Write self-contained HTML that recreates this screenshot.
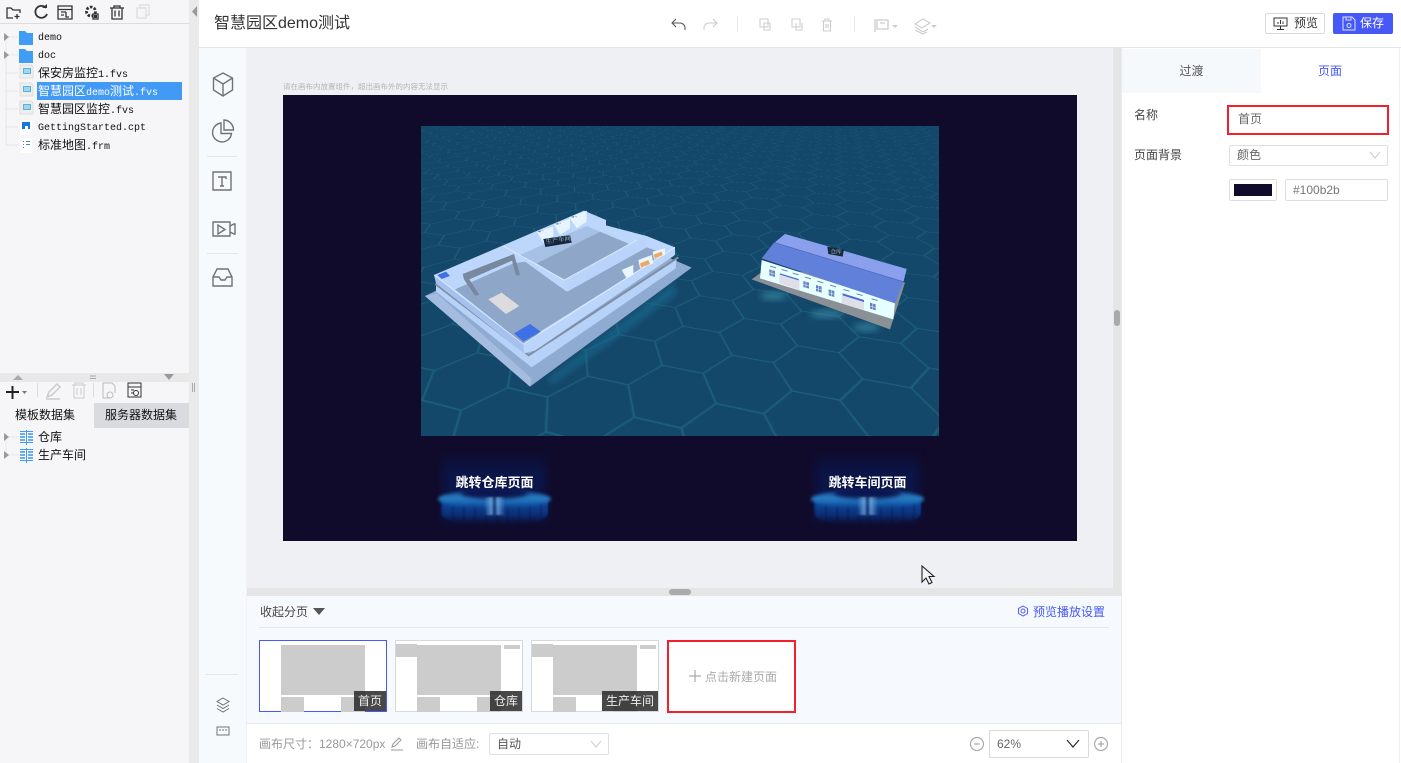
<!DOCTYPE html>
<html><head><meta charset="utf-8"><style>
html,body{margin:0;padding:0;width:1401px;height:763px;overflow:hidden;background:#fff;font-family:"Liberation Sans","Noto Sans CJK SC",sans-serif;font-size:12px;color:#333}
.a{position:absolute;box-sizing:border-box;white-space:nowrap}
svg{position:absolute;overflow:visible}
.t{position:absolute;font-family:"Liberation Mono","WenQuanYi Zen Hei","Noto Sans CJK SC",monospace;font-size:12px;line-height:18px;color:#111;letter-spacing:0;white-space:nowrap}
.t i{font-style:normal;font-size:10px}
.thumb{position:absolute;top:640px;width:128px;height:72px;background:#fff;border:1px solid #d5d8dc;box-sizing:border-box}
.thumb b{position:absolute;background:#ccc}
.thumb span{position:absolute;right:0;bottom:0;height:20px;line-height:20px;background:rgba(40,40,40,.85);color:#eee;font-size:12px;padding:0 4px}
.glow{position:absolute;top:450px;width:117px;height:77px;overflow:hidden;background:linear-gradient(90deg,rgba(16,11,43,0),#0b1548 12%,#0b1548 88%,rgba(16,11,43,0));-webkit-mask-image:linear-gradient(rgba(0,0,0,0),#000 30%,#000 85%,rgba(0,0,0,0));mask-image:linear-gradient(rgba(0,0,0,0),#000 30%,#000 85%,rgba(0,0,0,0))}
.glow .ring{position:absolute;left:2px;top:40px;width:113px;height:18px;border-radius:50%;filter:blur(1.500px);background:linear-gradient(#123f88 0,#2a80c4 45%,#1560b0 75%,#0e3a80 100%)}
.glow .hole{position:absolute;left:25px;top:37px;width:67px;height:12px;border-radius:50%;background:#0b1650;filter:blur(2px)}
.glow .body{position:absolute;left:5px;top:50px;width:107px;height:27px;filter:blur(.8px);background:repeating-linear-gradient(90deg,rgba(6,16,70,.3) 0 2px,transparent 2px 11px),linear-gradient(#0e4c9c 0,#0c3480 45%,rgba(14,24,80,0) 100%);border-radius:0 0 50% 50%}
.glow .mid{position:absolute;left:48px;top:47px;width:21px;height:18px;filter:blur(.8px);background:linear-gradient(90deg,transparent,#8fcaf5 35%,#10245f 50%,#8fcaf5 65%,transparent);opacity:.6}
</style></head><body>

<!-- left panel -->
<div class="a" style="left:0;top:0;width:189px;height:763px;background:#f6f6f8"></div>
<div class="a" style="left:189px;top:0;width:10px;height:763px;background:#eaeaea"></div>
<div class="a" style="left:0;top:23px;width:189px;height:1px;background:#dcdcdf"></div>
<svg style="left:0;top:0" width="200" height="24" viewBox="0 0 200 24" fill="none" stroke="#333" stroke-width="1.300">
<path d="M13 18H7V8h4l2 2h7v3M17 14v5M14.500 16.500h5"/>
<path d="M46 8a6 6 0 1 0 1 6" stroke-width="1.800"/><path d="M42 8h5V4z" fill="#333" stroke="none"/>
<path d="M58 6h14v13H58zM58 9.500h14M61 12h5M61 15h3M66 12v5h3"/>
<circle cx="91" cy="11.500" r="4.500" stroke-width="2.800" stroke-dasharray="2.500 1.500"/><path d="M93 14h5v5h-5z" fill="#f6f6f8"/><path d="M94 15h3v3h-3z" fill="#333" stroke="none"/>
<path d="M110 8h14M114 8V6h6v2M112 8v11h10V8M115 10.500v6M119 10.500v6"/>
<path d="M137 8h9v10h-9zM140 8V5h9v10h-3" stroke="#ddd"/>
</svg>
<svg style="left:192px;top:6px" width="6" height="12"><path d="M5 0v11L0 5.500z" fill="#999"/></svg>

<!-- tree -->
<svg style="left:0;top:28px" width="60" height="130" fill="none">
<path d="M6 9v108M6 9h12M6 27h12M6 45h12M6 63h12M6 81h12M6 99h12M6 117h12" stroke="#e6e6e6"/>
<path d="M4 5l5 4-5 4zM4 23l5 4-5 4z" fill="#999"/>
<path d="M19 3h6l2 2h6v12H19z M19 21h6l2 2h6v12H19z" fill="#3f9cf7"/>
</svg>
<svg style="left:20px;top:64px" width="16" height="90">
<g><path d="M0 1h11l2 2v11H0z" fill="#eee" stroke="#ddd"/><path d="M3 4h8v6H3z" fill="#5fb0d8"/><path d="M4 6h6M4 8h6" stroke="#dff"/></g>
<g transform="translate(0,36)"><path d="M0 1h11l2 2v11H0z" fill="#eee" stroke="#ddd"/><path d="M3 4h8v6H3z" fill="#5fb0d8"/><path d="M4 6h6M4 8h6" stroke="#dff"/></g>
<g transform="translate(0,18)"><path d="M0 1h11l2 2v11H0z" fill="#eee" stroke="#ddd"/><path d="M3 4h8v6H3z" fill="#5fb0d8"/><path d="M4 6h6M4 8h6" stroke="#dff"/></g>
<path d="M0 56h12v12H9l3 3H0z" fill="#fff"/><path d="M2 58h8v7H8V62H5v3H2z" fill="#1878d8"/>
<path d="M0 74h12v12H9l3 3H0z" fill="#fff"/><path d="M3 77h1v1H3zM3 80h1v1H3zM3 83h1v1H3zM6 77h4v1H6zM6 80h4v1H6z" fill="#48a"/>
</svg>
<div class="a" style="left:37px;top:82px;width:145px;height:18px;background:#4299f6"></div>
<div class="t" style="left:38px;top:28px"><i>demo</i></div>
<div class="t" style="left:38px;top:46px"><i>doc</i></div>
<div class="t" style="left:38px;top:65px">保安房监控<i>1.fvs</i></div>
<div class="t" style="left:38px;top:83px;color:#fff">智慧园区<i>demo</i>测试<i>.fvs</i></div>
<div class="t" style="left:38px;top:101px">智慧园区监控<i>.fvs</i></div>
<div class="t" style="left:38px;top:118px"><i>GettingStarted.cpt</i></div>
<div class="t" style="left:38px;top:137px">标准地图<i>.frm</i></div>

<!-- splitter -->
<div class="a" style="left:0;top:373px;width:189px;height:9px;background:#e8e8e8"></div>
<svg style="left:0;top:373px" width="200" height="60" fill="none">
<path d="M13 7l5-5 5 5z" fill="#aaa"/><path d="M164 1h10l-5 6z" fill="#999"/><path d="M90 3h6M90 5.500h6" stroke="#aaa"/>
<path d="M192.500 10v9M194.500 10v9" stroke="#aaa"/>
<path d="M6 19h13M12.500 13v13" stroke="#222" stroke-width="2"/><path d="M22 18h5l-2.500 3z" fill="#777"/>
<path d="M37.500 10v14M93.500 10v14" stroke="#ddd"/>
<path d="M47 24l2-5 8-8 3 3-8 8zM46 26h14" stroke="#ccc" stroke-width="1.500"/>
<path d="M72 12h14M75 12v-2h8v2M74 12v13h10V12M77 15v7M81 15v7" stroke="#ccc"/>
<path d="M103 25V10h9l3 3v7M109 25h-6" stroke="#bbb"/><circle cx="110" cy="22" r="3" stroke="#bbb"/>
<path d="M128 10h13v14h-13zM128 14h13M131 17h3M131 20h3" stroke="#333"/><circle cx="136" cy="20" r="2.500" stroke="#333"/>
</svg>
<div class="a" style="left:0;top:403px;width:90px;height:25px;text-align:center;line-height:25px;color:#111">模板数据集</div>
<div class="a" style="left:94px;top:403px;width:95px;height:25px;background:#dadbde;padding-left:11px;line-height:25px;color:#111">服务器数据集</div>
<svg style="left:0;top:428px" width="40" height="40" fill="none">
<path d="M6 9v18M6 9h12M6 27h12" stroke="#e6e6e6"/><path d="M4 5l5 4-5 4zM4 23l5 4-5 4z" fill="#999"/>
<g><path d="M20 3.500h13M20 14.500h13M26.500 2v15" stroke="#3f9cf7"/><path d="M20 5h5v2h-5zM20 8h5v2h-5zM20 11h5v2h-5zM28 5h5v2h-5zM28 8h5v2h-5zM28 11h5v2h-5z" fill="#6aaee8"/></g>
<g transform="translate(0,18)"><path d="M20 3.500h13M20 14.500h13M26.500 2v15" stroke="#3f9cf7"/><path d="M20 5h5v2h-5zM20 8h5v2h-5zM20 11h5v2h-5zM28 5h5v2h-5zM28 8h5v2h-5zM28 11h5v2h-5z" fill="#6aaee8"/></g>
</svg>
<div class="t" style="left:38px;top:429px">仓库</div>
<div class="t" style="left:38px;top:447px">生产车间</div>

<!-- header -->
<div class="a" style="left:199px;top:0;width:1202px;height:48px;background:#fff;border-bottom:1px solid #e4e6ea"></div>
<div class="a" style="left:214px;top:12px;font-size:16px;line-height:24px;color:#333">智慧园区demo测试</div>
<svg style="left:660px;top:12px" width="290" height="26" fill="none" stroke="#ccc" stroke-width="1.100">
<path d="M13 11h7a5 5 0 0 1 5 5v2M16 7l-4 4 4 4" stroke="#555"/>
<path d="M44 18v-2a5 5 0 0 1 5-5h7M53 7l4 4-4 4"/>
<path d="M77.500 4v16M194.500 4v16" stroke="#e8e8e8"/>
<path d="M100 7h8v8h-8zM104 11h6v7h-6z"/><path d="M132 7h8v8h-8zM136 11v7h6v-7"/>
<path d="M162 9h10M165 9V7h4v2M163.500 9v10h7V9M166 12v4M168 12v4"/>
<path d="M215 7v13M217 8h11v9h-11zM220 11h5" stroke-width="1.300"/><path d="M232 13h6l-3 3z" fill="#ccc" stroke="none"/>
<path d="M255 12l8-5 7 4-8 5zM255 15l8 5 5-3M255 18l8 4 4-2"/><path d="M271 13h6l-3 3z" fill="#ccc" stroke="none"/>
</svg>
<div class="a" style="left:1265px;top:13px;width:60px;height:21px;border:1px solid #d7d9dc;border-radius:2px;background:#fff;color:#333;line-height:19px;padding-left:28px">预览</div>
<svg style="left:1273px;top:17px" width="16" height="14" fill="none" stroke="#333"><path d="M1 1h13v8H1zM7.500 9v3M4 12.500h7M5 7V5M7.500 7V3M10 7V4.500"/></svg>
<div class="a" style="left:1333px;top:13px;width:60px;height:21px;border-radius:2px;background:#4658f7;color:#fff;line-height:21px;padding-left:27px">保存</div>
<svg style="left:1342px;top:16px" width="14" height="15" fill="none" stroke="#dfe3ff"><path d="M1 1h9l3 3v10H1zM4 1v3h5V1"/><circle cx="7" cy="9.500" r="2"/></svg>

<!-- rail -->
<div class="a" style="left:199px;top:48px;width:48px;height:715px;background:#f7fafd;border-right:1px solid #f0f2f5"></div>
<svg style="left:199px;top:48px" width="48" height="700" fill="none" stroke="#6f7276" stroke-width="1.400">
<path d="M24 25l9.500 5v12L24 48l-9.500-6V30zM14.500 30l9.500 6 9.500-6M24 36v12"/>
<path d="M22 75a9.500 9.500 0 1 0 10.500 10.500H22zM25 72v10h9.500A10 10 0 0 0 25 72z"/>
<path d="M8 108.500h30M8 205.500h30" stroke="#e2e4e8" stroke-width="1"/>
<path d="M14 124h18v18H14zM19 129h8v2M23 129v9M21 138h4"/>
<path d="M14 174h17v14H14zM31 178l4-2h1v10h-1l-4-2M19 177v9l7-4.500z"/>
<path d="M14 229l4-8h11l4 8v9H14zM14 229h6l2 3h4l2-3h5M18 221h11"/>
<path d="M6 626.500h33" stroke="#e2e4e8" stroke-width="1"/>
<path d="M24 650l6 3.500-6 3.500-6-3.500zM18 657l6 3.500 6-3.500M18 660.500l6 3.500 6-3.500" stroke-width="1"/>
<path d="M18 679h12v8H18z" stroke-width="1"/><path d="M20 682h2M23 682h2M26 682h2" stroke-width="1"/>
</svg>

<!-- canvas -->
<div class="a" style="left:247px;top:48px;width:866px;height:540px;background:#eff0f4"></div>
<div class="a" style="left:1113px;top:48px;width:8px;height:548px;background:#e5e5e5"></div>
<div class="a" style="left:1114px;top:310px;width:6px;height:16px;border-radius:3px;background:#aaa"></div>
<div class="a" style="left:247px;top:588px;width:866px;height:8px;background:#e5e5e5"></div>
<div class="a" style="left:669px;top:589px;width:22px;height:6px;border-radius:3px;background:#aaa"></div>
<div class="a" style="left:283px;top:81px;font-size:7.500px;line-height:12px;color:#b5b5b8">请在画布内放置组件，超出画布外的内容无法显示</div>
<div class="a" style="left:283px;top:95px;width:794px;height:446px;background:#100b2b"></div>

<!-- scene -->
<div class="a" style="left:421px;top:126px;width:518px;height:310px;overflow:hidden;background:#14486a;perspective:433px;perspective-origin:259px 172px">
<svg width="6000" height="3000" style="left:-2741px;top:-2590px;transform:rotateX(60deg);transform-origin:3000px 2900px">
<defs><pattern id="hx" width="111" height="64.090" patternUnits="userSpaceOnUse" patternTransform="translate(60 20) rotate(17) scale(1.400)"><path d="M0 32.045L18.500 0H55.500L74 32.045L55.500 64.090H18.500ZM74 32.045H111" fill="none" stroke="#1c627c" stroke-width="1.500"/></pattern></defs>
<rect width="6000" height="3000" fill="url(#hx)"/>
</svg>
</div>
<svg style="left:0;top:0" width="1401" height="763">
<defs><filter id="bl" x="-30%" y="-30%" width="160%" height="160%"><feGaussianBlur stdDeviation="10"/></filter><filter id="b1"><feGaussianBlur stdDeviation="0.400"/></filter></defs>
<g transform="translate(420,120) scale(.33333)" filter="url(#b1)">
<!-- shadows -->
<path d="M380 780L760 490L770 520L400 790z" fill="#1b6c92" opacity=".7" filter="url(#bl)"/>
<ellipse cx="1060" cy="528" rx="40" ry="12" fill="#3a8ea8" opacity=".7" filter="url(#bl)"/>
<ellipse cx="1220" cy="582" rx="50" ry="12" fill="#3a8ea8" opacity=".7" filter="url(#bl)"/>
<ellipse cx="1340" cy="622" rx="40" ry="12" fill="#3a8ea8" opacity=".7" filter="url(#bl)"/>
<!-- factory -->
<path d="M15 528L490 300L815 443L330 800z" fill="#8fabd2"/>
<path d="M15 528L330 800L335 775L50 520z" fill="#a3bcdf"/>
<path d="M48 490L330 705L770 415L767 445L335 742L48 515z" fill="#b7d2f8"/>
<path d="M46 492L326 706L775 412" fill="none" stroke="#7f8ea4" stroke-width="6"/>
<path d="M42 465L310 672L312 700L48 490z" fill="#a5c2ee"/>
<path d="M310 672L765 382V405L345 692L312 700z" fill="#bcd6fb"/>
<path d="M42 465L492 272L558 300V316L680 348L765 382L310 672z" fill="#bdd7fc"/>
<path d="M105 508L280 430L315 425L440 515L680 382L735 400L365 632L345 650L310 672z" fill="#8ea6c8"/>
<path d="M300 405L400 360L500 318L540 335L350 430z" fill="#a6c0e6"/>
<path d="M350 430L540 335L628 372L432 480z" fill="#8ea6c8"/>
<path d="M250 378L440 482L680 350L680 382L442 515L432 480L320 420z" fill="#b9d3fa"/>
<path d="M42 465L310 672L765 382M250 378L432 480L650 360" fill="none" stroke="#eaf3ff" stroke-width="2"/>
<path d="M128 462L282 402L300 465L288 467L276 422L148 478L178 525L165 527L132 478z" fill="#78899f"/>
<path d="M205 538L245 518L298 558L258 582z" fill="#dedbdf"/>
<path d="M282 640L330 612L362 635L310 665z" fill="#3f6fe6"/>
<path d="M52 465L78 455L90 468L65 477z" fill="#3f6fe6"/>
<path d="M605 450L640 435V465L620 475z" fill="#e8f6ff"/>
<path d="M655 420L695 405L700 430L660 445z" fill="#e8f6ff"/>
<path d="M660 430L685 420L690 432L663 443z" fill="#f0a860"/>
<path d="M698 395L735 385L735 405L702 418z" fill="#e8f6ff"/>
<path d="M702 403L725 395L728 405L704 416z" fill="#f0a860"/>
<path d="M350 335L400 320V350L370 368z M402 312L450 296V325L420 345z M448 292L500 272V305L470 325z" fill="#e6f4ff"/>
<path d="M352 335l10-3v5zM405 312l10-3v5zM452 291l10-3v5z" fill="#4577d8"/>
<path d="M362 332l8-2v4zM415 310l8-2v4zM462 290l8-2v4z" fill="#f0a860"/>
<path d="M370 357L450 345L455 368L376 381z" fill="#14283c"/>
<text x="378" y="371" font-size="19" fill="#bcd" font-family="'Noto Serif CJK SC',serif" transform="rotate(-8 378 371)">生产车间</text>
<!-- warehouse -->
<path d="M995 478L1040 445L1455 488L1410 628z" fill="#8b8f96"/>
<path d="M1025 420L1425 548L1420 598L1020 475z" fill="#e6ffff"/>
<path d="M1078 460L1138 480V510L1078 490z M1265 518L1332 540V570L1265 550z" fill="#dfdfe8"/>
<path d="M1080 460L1136 477V481L1080 464zM1268 520L1332 540V546L1268 526z" fill="#4a6ad0"/>
<path d="M1095 342L1460 447L1450 488L1425 550L1025 415L1060 370z" fill="#6080da"/>
<path d="M1095 342L1460 447L1450 485L1065 368z" fill="#8aa0ec"/>
<path d="M1065 368L1450 485" stroke="#4a64b8" stroke-width="2"/>
<path d="M1048 448l17 5v18l-17-5zM1150 483l17 5v18l-17-5zM1188 495l17 5v18l-17-5zM1226 508l17 5v18l-17-5zM1350 548l17 5v18l-17-5z" fill="#6a82bc"/>
<path d="M1056 450v18M1158 485v18M1196 497v18M1234 510v18M1358 550v18M1048 458l17 5M1150 493l17 5M1188 505l17 5M1226 518l17 5M1350 558l17 5" stroke="#e6ffff" stroke-width="1.500"/>
<path d="M1050 437l18 5v3l-18-5zM1085 447l18 5v3l-18-5zM1118 458l18 5v3l-18-5zM1155 470l18 5v3l-18-5zM1192 482l18 5v3l-18-5zM1230 494l18 5v3l-18-5zM1270 507l18 5v3l-18-5zM1310 520l18 5v3l-18-5zM1355 535l18 5v3l-18-5z" fill="#6a80b8"/>
<path d="M1222 380L1272 388L1268 410L1225 402z" fill="#15293c"/>
<text x="1231" y="400" font-size="17" fill="#bcd" font-family="'Noto Serif CJK SC',serif">仓库</text>
</g>
</svg>

<!-- jump buttons -->
<div class="glow" style="left:436px"><div class="body"></div><div class="ring"></div><div class="hole"></div><div class="mid"></div></div>
<div class="glow" style="left:809px"><div class="body"></div><div class="ring"></div><div class="hole"></div><div class="mid"></div></div>
<div class="a" style="left:436px;top:474px;width:117px;text-align:center;font-size:13px;line-height:18px;font-weight:700;color:#fff">跳转仓库页面</div>
<div class="a" style="left:809px;top:474px;width:117px;text-align:center;font-size:13px;line-height:18px;font-weight:700;color:#fff">跳转车间页面</div>

<svg style="left:920px;top:564px" width="16" height="22"><path d="M2 2v16l4-4 3 6 3-1.500-3-6h5z" fill="#f4f4f6" stroke="#222" stroke-width="1.100"/></svg>

<!-- pages panel -->
<div class="a" style="left:247px;top:596px;width:874px;height:127px;background:#f6f9fd"></div>
<div class="a" style="left:260px;top:603px;line-height:18px;color:#444">收起分页</div>
<svg style="left:313px;top:608px" width="12" height="8"><path d="M0 0h12L6 7z" fill="#555"/></svg>
<div class="a" style="left:259px;top:627px;width:850px;height:1px;background:#e6e8ec"></div>
<svg style="left:1017px;top:605px" width="12" height="13" fill="none" stroke="#4f60f5"><path d="M6 1l4.500 2.500v5L6 11 1.500 8.500v-5z"/><circle cx="6" cy="6" r="2"/></svg>
<div class="a" style="left:1033px;top:603px;line-height:18px;color:#4658f7">预览播放设置</div>

<div class="thumb" style="left:259px;border-color:#4658f7">
<b style="left:21px;top:4px;width:84px;height:50px"></b><b style="left:21px;top:56px;width:23px;height:15px"></b><b style="left:81px;top:56px;width:24px;height:15px"></b><span>首页</span></div>
<div class="thumb" style="left:395px">
<b style="left:0;top:3px;width:21px;height:13px"></b><b style="left:21px;top:4px;width:84px;height:50px"></b><b style="left:21px;top:56px;width:23px;height:15px"></b><b style="left:81px;top:56px;width:24px;height:15px"></b><b style="left:108px;top:4px;width:16px;height:4px"></b><span>仓库</span></div>
<div class="thumb" style="left:531px">
<b style="left:0;top:3px;width:21px;height:13px"></b><b style="left:21px;top:4px;width:84px;height:50px"></b><b style="left:21px;top:56px;width:23px;height:15px"></b><b style="left:81px;top:56px;width:24px;height:15px"></b><b style="left:108px;top:4px;width:16px;height:4px"></b><span>生产车间</span></div>
<div class="a" style="left:667px;top:640px;width:129px;height:73px;background:#fff;border:2px solid #f3202c;color:#aaa;line-height:70px;padding-left:36px;font-size:12px">点击新建页面</div>
<svg style="left:689px;top:670px" width="12" height="12"><path d="M6 0v12M0 6h12" stroke="#999"/></svg>

<!-- footer -->
<div class="a" style="left:247px;top:723px;width:874px;height:40px;background:#fff;border-top:1px solid #e6e8ec"></div>
<div class="a" style="left:259px;top:735px;line-height:18px;color:#999">画布尺寸：1280×720px</div>
<svg style="left:389px;top:736px" width="16" height="16" fill="none" stroke="#999"><path d="M3 11l1-3 6-6 2 2-6 6zM2 14h12"/></svg>
<div class="a" style="left:416px;top:735px;line-height:18px;color:#999">画布自适应:</div>
<div class="a" style="left:489px;top:733px;width:120px;height:22px;border:1px solid #dcdfe3;border-radius:2px;background:#fff;line-height:20px;padding-left:7px;color:#555">自动</div>
<svg style="left:590px;top:740px" width="12" height="8" fill="none" stroke="#ccc"><path d="M1 1l5 6 5-6"/></svg>
<svg style="left:969px;top:736px" width="16" height="16" fill="none" stroke="#aaa" stroke-width="1.200"><circle cx="8" cy="8" r="6.500"/><path d="M5 8h6"/></svg>
<div class="a" style="left:989px;top:730px;width:100px;height:28px;border:1px solid #d8dade;border-radius:2px;background:#fff;line-height:26px;padding-left:7px;color:#666">62%</div>
<svg style="left:1066px;top:739px" width="14" height="10" fill="none" stroke="#333" stroke-width="1.300"><path d="M1 1l6 7 6-7"/></svg>
<svg style="left:1093px;top:736px" width="16" height="16" fill="none" stroke="#aaa" stroke-width="1.200"><circle cx="8" cy="8" r="6.500"/><path d="M5 8h6M8 5v6"/></svg>

<!-- right panel -->
<div class="a" style="left:1121px;top:48px;width:279px;height:715px;background:#fff;border-left:1px solid #e8eaee;border-right:1px solid #eceef1"></div>
<div class="a" style="left:1122px;top:49px;width:139px;height:44px;background:#f6f9fc;text-align:center;line-height:44px;color:#555">过渡</div>
<div class="a" style="left:1261px;top:49px;width:138px;height:44px;background:#fff;text-align:center;line-height:44px;color:#4658f7">页面</div>
<div class="a" style="left:1134px;top:106px;line-height:18px;color:#444">名称</div>
<div class="a" style="left:1227px;top:105px;width:162px;height:30px;border:2px solid #f3202c;background:#fff;line-height:25px;padding-left:9px;color:#666">首页</div>
<div class="a" style="left:1134px;top:146px;line-height:18px;color:#444">页面背景</div>
<div class="a" style="left:1229px;top:145px;width:159px;height:21px;border:1px solid #dcdfe3;border-radius:2px;line-height:19px;padding-left:7px;color:#666;background:#fff">颜色</div>
<svg style="left:1369px;top:151px" width="12" height="9" fill="none" stroke="#ccc"><path d="M1 1l5 6 5-6"/></svg>
<div class="a" style="left:1229px;top:179px;width:48px;height:22px;border:1px solid #dcdfe3;border-radius:2px;background:#fff"></div>
<div class="a" style="left:1234px;top:184px;width:38px;height:12px;background:#100b2b"></div>
<div class="a" style="left:1285px;top:179px;width:103px;height:22px;border:1px solid #dcdfe3;border-radius:2px;line-height:20px;padding-left:7px;color:#777;background:#fff">#100b2b</div>

</body></html>
